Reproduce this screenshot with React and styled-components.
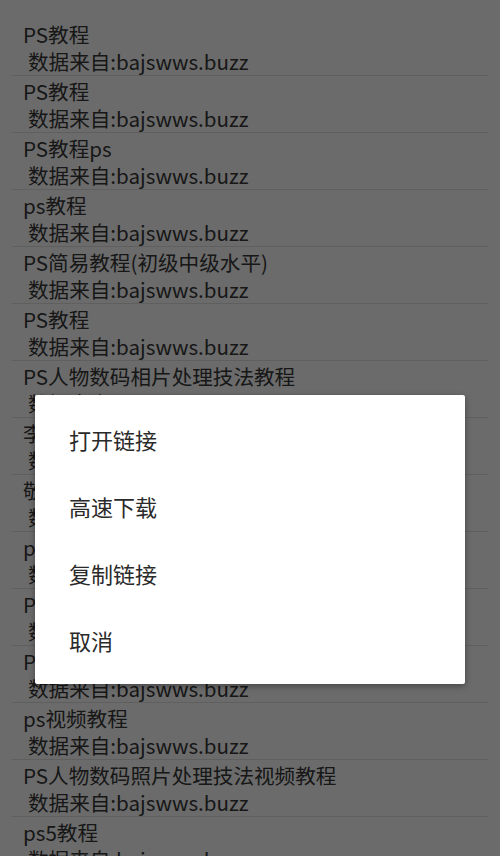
import React from 'react';
import styled, { createGlobalStyle } from 'styled-components';

const GlobalStyle = createGlobalStyle`
  html, body {
    margin: 0;
    padding: 0;
    background: #ffffff;
    overflow: hidden;
  }
  body {
    font-family: "Noto Sans CJK SC", "Noto Sans", sans-serif;
  }
`;

const items = [
  'PS教程',
  'PS教程',
  'PS教程ps',
  'ps教程',
  'PS简易教程(初级中级水平)',
  'PS教程',
  'PS人物数码相片处理技法教程',
  '李涛PS教程',
  '敬伟PS教程',
  'ps教程视频',
  'PS教程视频',
  'PS抠图教程',
  'ps视频教程',
  'PS人物数码照片处理技法视频教程',
  'ps5教程',
];

const actions = ['打开链接', '高速下载', '复制链接', '取消'];

const App = () => {
  return (
    <Screen>
      <GlobalStyle />
      <List>
        {items.map((title, index) => (
          <Row key={index}>
            <Title>{title}</Title>
            <Source>数据来自:bajswws.buzz</Source>
          </Row>
        ))}
      </List>

      <Backdrop />

      <Dialog>
        {actions.map((label) => (
          <Action key={label}>{label}</Action>
        ))}
      </Dialog>
    </Screen>
  );
};

const Screen = styled.div`
  position: relative;
  width: 500px;
  height: 856px;
  overflow: hidden;
  background: #ffffff;
`;

const List = styled.div`
  display: flex;
  flex-direction: column;
  padding-top: 19px;
  padding-left: 12px;
  padding-right: 12px;
`;

const Row = styled.div`
  display: flex;
  flex-direction: column;
  padding: 2px 0 0 11px;
  border-bottom: 1px solid #e2e2e2;
  height: 54px;
`;

const Title = styled.div`
  font-size: 20.6px;
  line-height: 27px;
  color: #383838;
  white-space: nowrap;
`;

const Source = styled.div`
  font-size: 20.6px;
  line-height: 27px;
  color: #383838;
  white-space: nowrap;
  padding-left: 5px;
`;

const Backdrop = styled.div`
  position: absolute;
  inset: 0;
  background: rgba(0, 0, 0, 0.58);
`;

const Dialog = styled.div`
  position: absolute;
  top: 395px;
  left: 35px;
  width: 430px;
  padding: 10px 0 11px;
  background: #ffffff;
  border-radius: 2px;
  box-shadow: 0 2px 6px rgba(0, 0, 0, 0.35);
  display: flex;
  flex-direction: column;
`;

const Action = styled.div`
  height: 67px;
  display: flex;
  align-items: center;
  padding-left: 34px;
  font-size: 22px;
  color: #2a2a2a;
`;

export default App;
